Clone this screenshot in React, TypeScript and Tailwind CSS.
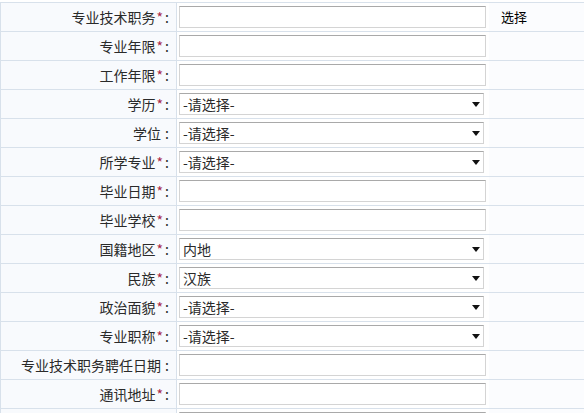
import React from 'react';

type Field = { label: string; required: boolean; kind: 'text' | 'select'; value?: string; extra?: string };

const fields: Field[] = [
  { label: '专业技术职务', required: true, kind: 'text', extra: '选择' },
  { label: '专业年限', required: true, kind: 'text' },
  { label: '工作年限', required: true, kind: 'text' },
  { label: '学历', required: true, kind: 'select', value: '-请选择-' },
  { label: '学位', required: false, kind: 'select', value: '-请选择-' },
  { label: '所学专业', required: true, kind: 'select', value: '-请选择-' },
  { label: '毕业日期', required: true, kind: 'text' },
  { label: '毕业学校', required: true, kind: 'text' },
  { label: '国籍地区', required: true, kind: 'select', value: '内地' },
  { label: '民族', required: true, kind: 'select', value: '汉族' },
  { label: '政治面貌', required: true, kind: 'select', value: '-请选择-' },
  { label: '专业职称', required: true, kind: 'select', value: '-请选择-' },
  { label: '专业技术职务聘任日期', required: false, kind: 'text' },
  { label: '通讯地址', required: true, kind: 'text' },
  { label: '', required: false, kind: 'text' },
];

export default function App() {
  return (
    <div
      className="w-[584px] h-[413px] overflow-hidden bg-white pt-[2px] text-[14px] text-[#2a2a2a]"
      style={{ fontFamily: '"Noto Sans CJK SC", "Microsoft YaHei", sans-serif' }}
    >
      <div className="border-t border-l border-[#d8e1eb]">
        {fields.map((f, i) => (
          <div key={i} className="flex h-[29px] border-b border-[#d8e1eb]">
            {/* label cell */}
            <div className="w-[176px] shrink-0 flex items-center justify-end pr-[7px] bg-[#f8fafd] border-r border-[#d8e1eb] leading-none">
              {f.label && (
                <>
                  <span>{f.label}</span>
                  {f.required ? (
                    <span className="text-[#a8284a] ml-[1px]">*</span>
                  ) : (
                    <span className="w-[2px]" />
                  )}
                  <span className="ml-[2px]">:</span>
                </>
              )}
            </div>

            {/* field cell */}
            <div className="w-[312px] shrink-0 flex items-center pl-[2px] bg-white">
              {f.kind === 'text' ? (
                <div className="w-[307px] h-[22px] bg-white border border-[#d4d4d4] border-t-[#a9a9a9]" />
              ) : (
                <div className="w-[305px] h-[22px] bg-white border border-[#d4d4d4] border-t-[#a9a9a9] flex items-center pl-[3px] pr-[3px] leading-none">
                  <span className="flex-1">{f.value}</span>
                  <svg width="8" height="5" viewBox="0 0 8 5">
                    <path d="M0 0H8L4 5Z" fill="#111" />
                  </svg>
                </div>
              )}
            </div>

            {/* extra cell */}
            <div className="flex-1 flex items-center pl-[12px] bg-[#fbfcfe] text-[13px] text-black">
              {f.extra}
            </div>
          </div>
        ))}
      </div>
    </div>
  );
}
